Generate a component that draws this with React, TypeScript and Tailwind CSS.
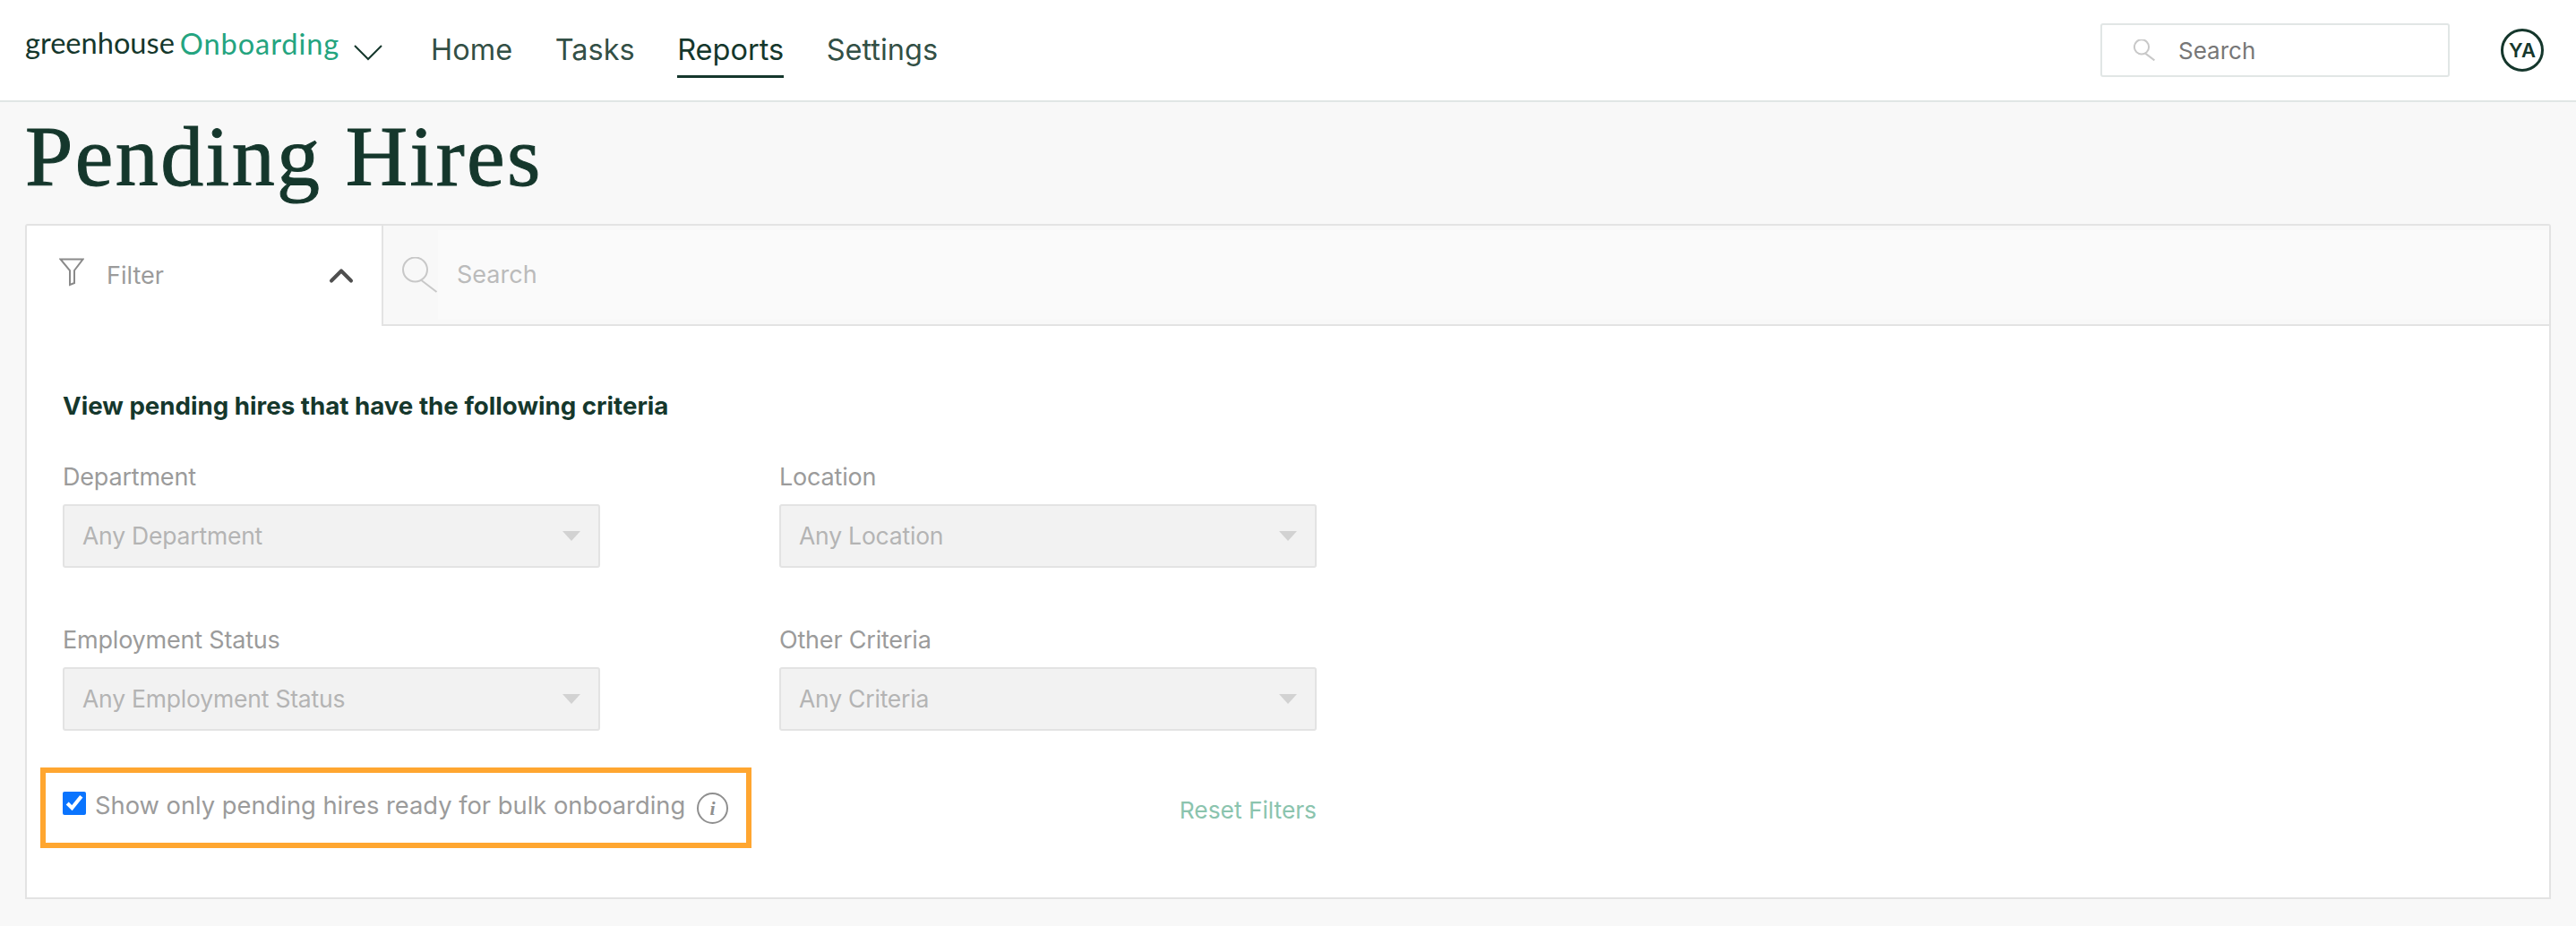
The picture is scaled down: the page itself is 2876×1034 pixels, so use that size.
import { ChevronUp } from 'lucide-react';

const SANS = "[font-family:Inter,sans-serif]";

function SearchGlyph({ className }: { className: string }) {
  return (
    <svg viewBox="0 0 40 40" fill="none" stroke="currentColor" strokeWidth="2" className={className}>
      <circle cx="15" cy="14" r="13.5" vectorEffect="non-scaling-stroke" />
      <path d="M22 26l17 13" vectorEffect="non-scaling-stroke" />
    </svg>
  );
}

function SelectField({ label, value }: { label: string; value: string }) {
  return (
    <div className="flex flex-col">
      <label className="h-[34px] text-[27px] leading-[34px] text-[#9b9b9b] tracking-[-0.2px]">{label}</label>
      <div className="mt-[13px] flex h-[71px] items-center justify-between rounded-[3px] border-2 border-[#e3e3e3] bg-[#f2f2f2] pl-[20px] pr-[20px]">
        <span className="text-[26.5px] text-[#b4b4b4] tracking-[-0.2px]">{value}</span>
        <span className="h-0 w-0 border-x-[10px] border-t-[11px] border-x-transparent border-t-[#d2d2d2]" />
      </div>
    </div>
  );
}

export default function App() {
  return (
    <div className={`${SANS} min-h-[1034px] bg-[#f8f8f8] text-[#15372c]`}>
      <header className="flex h-[114px] items-center border-b-2 border-[#e1e6e5] bg-white pl-[28px] pr-[36px]">
        <div className="flex items-center">
          <span className="mt-[-16px] text-[32.6px] text-[#15372c] [font-family:Lato,sans-serif]">greenhouse</span>
          <span className="ml-[6px] mt-[-14px] text-[32.6px] tracking-[0.9px] text-[#24a47f] [font-family:Lato,sans-serif]">Onboarding</span>
          <svg viewBox="0 0 32 18" fill="none" stroke="#15372c" strokeWidth="2" className="ml-[16px] mt-[6px] h-[18px] w-[32px]">
            <path d="M1 1l15 15L31 1" />
          </svg>
        </div>
        <nav className="ml-[54px] flex h-full items-center gap-[47.5px] text-[32.5px]">
          <a className="text-[#15372c]/90">Home</a>
          <a className="text-[#15372c]/90">Tasks</a>
          <a className="relative">
            Reports
            <span className="absolute inset-x-0 bottom-[-7px] h-[3px] bg-[#15372c]" />
          </a>
          <a className="text-[#15372c]/90">Settings</a>
        </nav>
        <div className="ml-auto flex items-center gap-[57px]">
          <div className="flex h-[60px] w-[390px] items-center rounded-[3px] border-2 border-[#e1e6e5] pl-[35px]">
            <SearchGlyph className="h-[24px] w-[24px] text-[#c8c8c8]" />
            <span className="ml-[26px] text-[26px] text-[#777777]">Search</span>
          </div>
          <div className="flex h-[48px] w-[48px] items-center justify-center rounded-full border-[3px] border-[#15372c] text-[22px] font-semibold">
            YA
          </div>
        </div>
      </header>

      <main className="px-[28px]">
        <h1 className="flex h-[136px] items-start pt-[8px] text-[96px] leading-[106px] tracking-[2.4px] text-[#15372c] [-webkit-text-stroke:1px_#15372c] [font-family:'Liberation_Serif',serif]">
          Pending Hires
        </h1>

        <section className="h-[754px] rounded-t-[3px] border-2 border-[#e3e3e3] bg-white">
          <div className="flex h-[112px]">
            <div className="flex w-[398px] items-center border-r-2 border-[#e3e3e3] pl-[36px] pr-[23px]">
              <svg viewBox="0 0 28 32" fill="none" stroke="#8a8a8a" strokeWidth="2" className="mt-[-8px] h-[32px] w-[28px]">
                <path d="M1.5 1.5h25L17 14v14l-5 2V14z" />
              </svg>
              <span className="ml-[25px] text-[27px] text-[#9b9b9b]">Filter</span>
              <ChevronUp className="ml-auto h-[44px] w-[44px] text-[#4f4f4f]" strokeWidth={2.2} />
            </div>
            <div className="flex flex-1 items-center border-b-2 border-[#e3e3e3] bg-[#f8f8f8] pl-[20px]">
              <SearchGlyph className="h-[40px] w-[41px] text-[#c8c8c8]" />
              <div className="flex h-[100px] flex-1 items-center bg-[#fafafa] pl-[21px]">
                <span className="text-[27px] text-[#bbbbbb]">Search</span>
              </div>
            </div>
          </div>

          <div className="pl-[40px] pt-[71px]">
            <h2 className="h-[36px] text-[27.7px] font-bold leading-[36px] text-[#15372c]">
              View pending hires that have the following criteria
            </h2>
            <div className="mt-[45px] grid w-[1400px] grid-cols-[600px_600px] gap-x-[200px] gap-y-[64px]">
              <SelectField label="Department" value="Any Department" />
              <SelectField label="Location" value="Any Location" />
              <SelectField label="Employment Status" value="Any Employment Status" />
              <SelectField label="Other Criteria" value="Any Criteria" />
            </div>
            <div className="mt-[41px] flex w-[1400px] items-center justify-between">
              <div className="ml-[-25px] flex h-[90px] w-[794px] items-start border-[6px] border-[#ffa630] pl-[19px] pt-[21px]">
                <input type="checkbox" checked readOnly className="m-0 h-[26px] w-[26px] accent-[#0a74fe]" />
                <span className="ml-[10px] mt-[-4px] text-[27.3px] text-[#9b9b9b]">
                  Show only pending hires ready for bulk onboarding
                </span>
                <span className="ml-[13px] mt-[1px] flex h-[35px] w-[35px] items-center justify-center rounded-full border-[2.5px] border-[#8f8f8f] text-[22px] font-bold italic text-[#8f8f8f] [font-family:'Liberation_Serif',serif]">
                  i
                </span>
              </div>
              <a className="mt-[6px] text-[26.3px] text-[#8bc4ae]">Reset Filters</a>
            </div>
          </div>
        </section>
      </main>
    </div>
  );
}
